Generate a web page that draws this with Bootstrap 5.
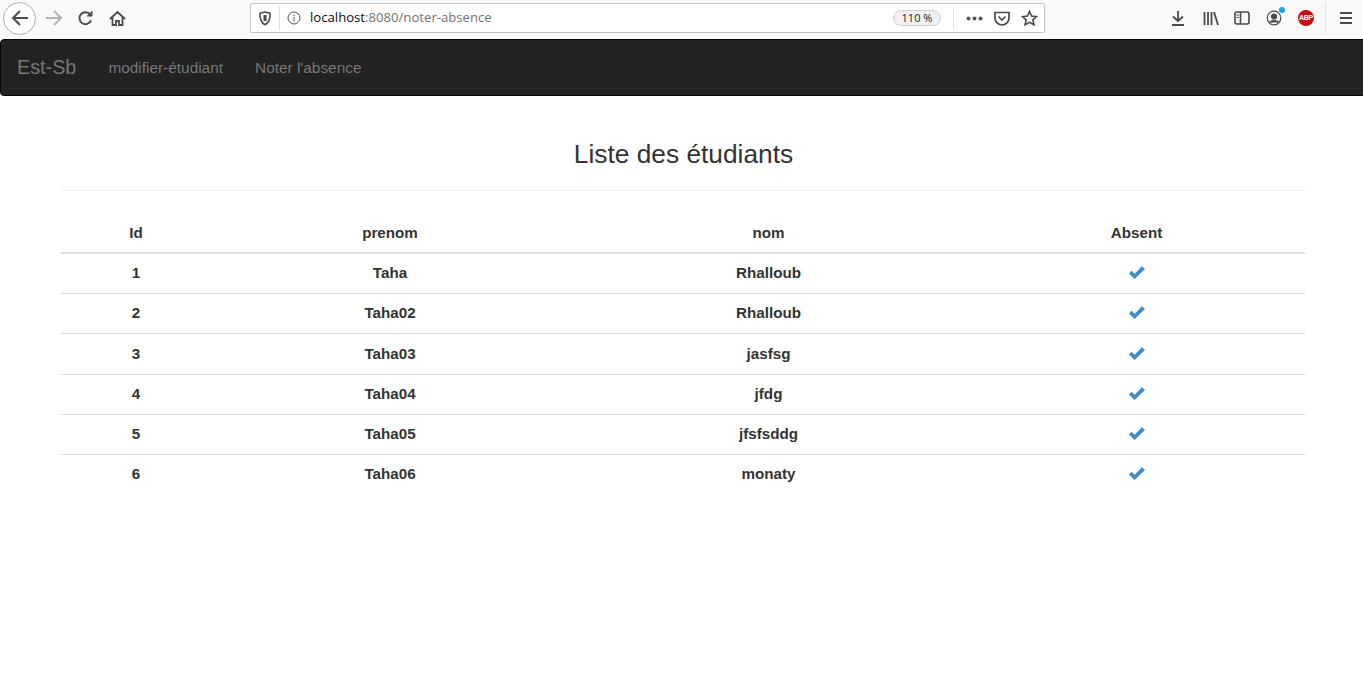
<!DOCTYPE html>
<html lang="fr">
<head>
<meta charset="utf-8">
<title>Liste des étudiants</title>
<link href="https://cdn.jsdelivr.net/npm/bootstrap@5.3.0/dist/css/bootstrap.min.css" rel="stylesheet">
<style>
html,body{height:100%;background:#fff;overflow:hidden}
body{font-family:"Liberation Sans",Arial,sans-serif;color:#333;font-size:15.2px}
.ff-bar{height:39px;background:#f9f9fa;color:#4a4a4f;position:relative;padding-bottom:3px}
.ff-bar svg{display:block;flex:none}
.ff-back{width:33px;height:33px;border:1px solid #b1b1b3;border-radius:50%;background:#fff;margin-left:3px}
.ff-url{width:795px;height:30px;background:#fff;border:1px solid #c4c4c6;border-radius:2px;font-family:"Open Sans","Noto Sans",sans-serif;font-size:13.15px}
.ff-host{color:#0c0c0d}
.ff-rest{color:#737373}
.ff-zoom{width:48px;height:16px;border:1px solid #d0d0d2;border-radius:8px;background:#f0f0f2;font-size:11px;line-height:14px;text-align:center;color:#222}
.ff-sep{width:1px;height:24px;background:#e2e2e4}
.ff-sep2{width:1px;height:34px;background:#e6e6e8}
.ff-abp{width:16px;height:16px;background:#c70d0c;border-radius:50%;color:#fff;font:bold 7px/16px "Liberation Sans",sans-serif;text-align:center;letter-spacing:-.2px}
.top-nav{height:57px;background:#222;border:1px solid #080808;border-radius:4px;margin-right:-5px}
.top-brand{font-size:19.8px;color:#777;margin-left:16px;margin-right:32px;text-decoration:none}
.top-link{font-size:15.4px;color:#777;margin-right:32px;text-decoration:none}
.page-wrap{padding:0 58px 0 61px}
.page-title{font-size:26.3px;font-weight:500;line-height:29px;color:#333;text-align:center;margin:0;padding:44px 0 21px 1px;border-bottom:1px solid #eee}
.etu-table{width:1244px;margin-top:21px;table-layout:fixed;border-collapse:collapse;font-weight:700;color:#333}
.etu-table th,.etu-table td{text-align:center;vertical-align:middle;padding:0;font-weight:700;line-height:22px;background:transparent;color:#333;box-shadow:none}
.etu-table thead th{height:41.2px;padding-top:2px;border-bottom:2px solid #ddd}
.etu-table tbody td{height:40px;border-bottom:1px solid #ddd}
.etu-table tbody tr:nth-child(3) td{height:41px}
.etu-table tbody tr:last-child td{border-bottom:0}
.tick{display:inline-block;vertical-align:middle;margin-top:-3px}
</style>
</head>
<body>
<div class="ff-bar d-flex align-items-center">
  <div class="ff-back d-flex align-items-center justify-content-center">
    <svg width="18" height="18" viewBox="0 0 18 18" fill="none" stroke="#4a4a4f" stroke-width="2"><path d="M17 9H2M9 2 2 9l7 7"/></svg>
  </div>
  <svg style="margin-left:9px" width="18" height="18" viewBox="0 0 18 18" fill="none" stroke="#b4b4b6" stroke-width="2"><path d="M1 9h15M9 2l7 7-7 7"/></svg>
  <svg style="margin-left:14px" width="17" height="17" viewBox="0 0 17 17" fill="none" stroke="#4a4a4f" stroke-width="2"><path d="M14 10.500A6 6 0 1 1 13.200 4.500"/><path d="M15 1v5H10" fill="#4a4a4f" stroke-width="1"/></svg>
  <svg style="margin-left:15px" width="17" height="17" viewBox="0 0 17 17" fill="none" stroke="#4a4a4f" stroke-width="1.800"><path d="M1 9 8.500 2 16 9M3.500 7.500V15H7v-4h3v4h3.500V7.500"/></svg>
  <div class="ff-url d-flex align-items-center" style="margin-left:124px">
    <svg style="margin-left:7px" width="14" height="15" viewBox="0 0 14 15" fill="none" stroke="#4a4a4f" stroke-width="1.600"><path d="M2 2.200 7 1l5 1.200c.3 5-.7 9.300-5 11.500C2.700 11.500 1.700 7.200 2 2.200Z"/><path d="M7 4v6" stroke-width="3"/></svg>
    <span class="ff-sep" style="margin-left:7px"></span>
    <svg style="margin-left:7px" width="14" height="14" viewBox="0 0 14 14" fill="none" stroke="#55555a" stroke-width="1"><circle cx="7" cy="7" r="6"/><path d="M7 6v4.500M7 3.500v1.500"/></svg>
    <span style="margin-left:9px"><span class="ff-host">localhost</span><span class="ff-rest">:8080/noter-absence</span></span>
    <span class="ff-zoom ms-auto">110 %</span>
    <span class="ff-sep" style="margin-left:12px"></span>
    <svg style="margin-left:12px" width="17" height="5" viewBox="0 0 17 5" fill="#55555a"><circle cx="2.500" cy="2.500" r="2"/><circle cx="8.500" cy="2.500" r="2"/><circle cx="14.500" cy="2.500" r="2"/></svg>
    <svg style="margin-left:11px" width="16" height="15" viewBox="0 0 16 15" fill="none" stroke="#4a4a4f" stroke-width="1.700"><path d="M1 1.500h14V7A7 7 0 0 1 1 7Z"/><path d="M4.500 5.500 8 9l3.500-3.500"/></svg>
    <svg style="margin-left:11px;margin-right:6px" width="17" height="16" viewBox="0 0 17 16" fill="none" stroke="#4a4a4f" stroke-width="1.600"><path d="m8.500 1.500 2.100 4.500 4.900.6-3.600 3.300 1 4.900-4.400-2.400-4.400 2.400 1-4.900L1.500 6.600l4.900-.6Z"/></svg>
  </div>
  <svg style="margin-left:125px" width="16" height="16" viewBox="0 0 16 16" fill="none" stroke="#4a4a4f" stroke-width="1.800"><path d="M8 1v10M3 6.500 8 11l5-4.500M2 15h12"/></svg>
  <svg style="margin-left:17px" width="16" height="15" viewBox="0 0 16 15" fill="none" stroke="#4a4a4f" stroke-width="1.800"><path d="M1.500 1v13M5 1v13M8.500 1v13M11 1l4 13"/></svg>
  <svg style="margin-left:15px" width="16" height="14" viewBox="0 0 16 14" fill="none" stroke="#4a4a4f" stroke-width="1.600"><rect x="1" y="1" width="14" height="12" rx="2"/><path d="M6.500 1v12"/><path d="M2.500 4h2.500M2.500 6.500h2.500" stroke-width="1"/></svg>
  <span class="position-relative" style="margin-left:16px;width:16px;height:16px">
    <svg width="16" height="16" viewBox="0 0 16 16" fill="none" stroke="#4a4a4f" stroke-width="1.200"><circle cx="8" cy="8" r="6.800"/><circle cx="8" cy="6.500" r="2.500" fill="#4a4a4f"/><path d="M3.500 12.500c1-2.500 8-2.500 9 0" fill="#4a4a4f"/></svg>
    <span class="position-absolute rounded-circle" style="width:6px;height:6px;background:#0ea5f0;right:-3px;top:-3px"></span>
  </span>
  <span class="ff-abp" style="margin-left:16px">ABP</span>
  <span class="ff-sep2" style="margin-left:11px"></span>
  <svg style="margin-left:14px" width="12" height="12" viewBox="0 0 12 12" fill="#4a4a4f"><rect y="0" width="12" height="2"/><rect y="5" width="12" height="2"/><rect y="10" width="12" height="2"/></svg>
</div>
<nav class="top-nav d-flex align-items-center">
  <a class="top-brand" href="#">Est-Sb</a>
  <a class="top-link" href="#">modifier-étudiant</a>
  <a class="top-link" href="#">Noter l'absence</a>
</nav>
<main class="page-wrap">
  <h3 class="page-title">Liste des étudiants</h3>
  <table class="etu-table">
    <colgroup><col style="width:150px"><col style="width:358px"><col style="width:399px"><col style="width:337px"></colgroup>
    <thead><tr><th>Id</th><th>prenom</th><th>nom</th><th>Absent</th></tr></thead>
    <tbody>
      <tr><td>1</td><td>Taha</td><td>Rhalloub</td><td><svg class="tick" width="16" height="13" viewBox="0 0 16 13" fill="#428bca"><path d="M0 7.600 2.600 4.800 5.600 7.700 13 .3 16 3 5.600 13Z"/></svg></td></tr>
      <tr><td>2</td><td>Taha02</td><td>Rhalloub</td><td><svg class="tick" width="16" height="13" viewBox="0 0 16 13" fill="#428bca"><path d="M0 7.600 2.600 4.800 5.600 7.700 13 .3 16 3 5.600 13Z"/></svg></td></tr>
      <tr><td>3</td><td>Taha03</td><td>jasfsg</td><td><svg class="tick" width="16" height="13" viewBox="0 0 16 13" fill="#428bca"><path d="M0 7.600 2.600 4.800 5.600 7.700 13 .3 16 3 5.600 13Z"/></svg></td></tr>
      <tr><td>4</td><td>Taha04</td><td>jfdg</td><td><svg class="tick" width="16" height="13" viewBox="0 0 16 13" fill="#428bca"><path d="M0 7.600 2.600 4.800 5.600 7.700 13 .3 16 3 5.600 13Z"/></svg></td></tr>
      <tr><td>5</td><td>Taha05</td><td>jfsfsddg</td><td><svg class="tick" width="16" height="13" viewBox="0 0 16 13" fill="#428bca"><path d="M0 7.600 2.600 4.800 5.600 7.700 13 .3 16 3 5.600 13Z"/></svg></td></tr>
      <tr><td>6</td><td>Taha06</td><td>monaty</td><td><svg class="tick" width="16" height="13" viewBox="0 0 16 13" fill="#428bca"><path d="M0 7.600 2.600 4.800 5.600 7.700 13 .3 16 3 5.600 13Z"/></svg></td></tr>
    </tbody>
  </table>
</main>
<script src="https://cdn.jsdelivr.net/npm/bootstrap@5.3.0/dist/js/bootstrap.bundle.min.js"></script>
</body>
</html>
